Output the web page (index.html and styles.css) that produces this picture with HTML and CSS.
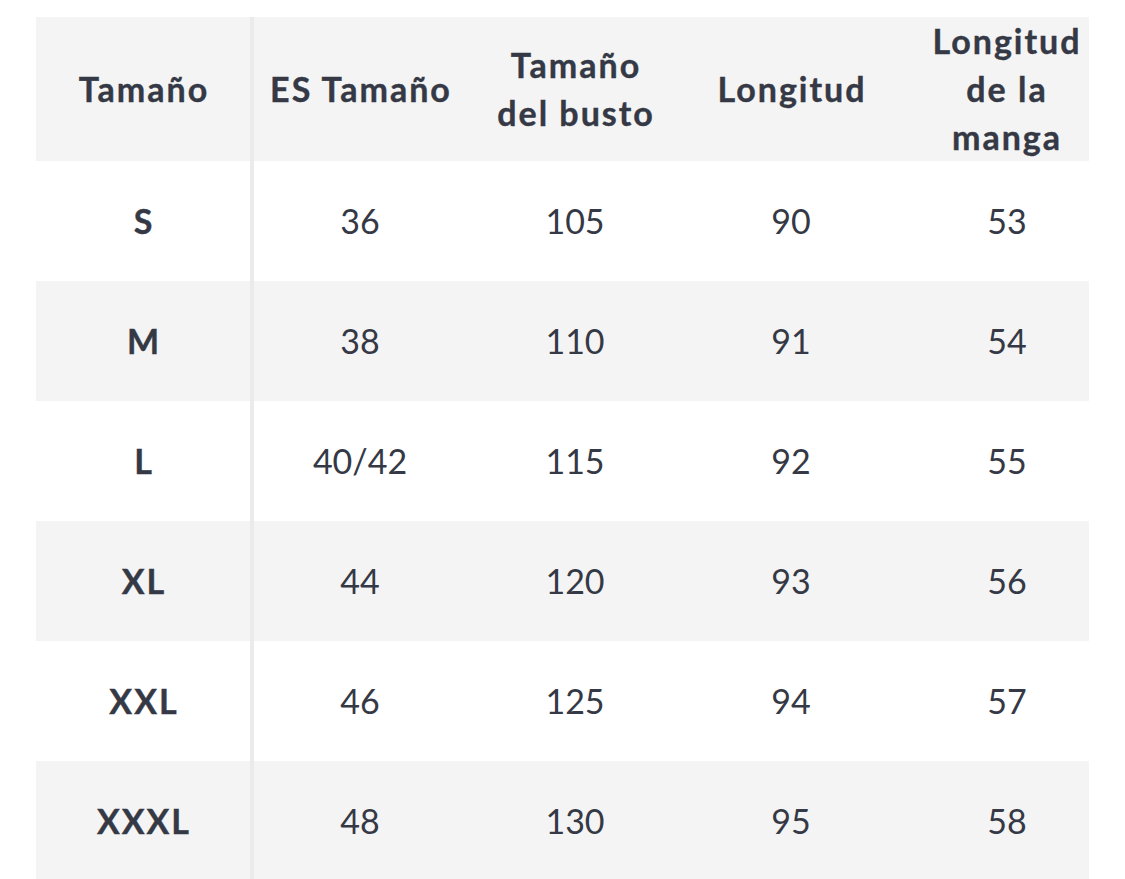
FILE: index.html
```html
<!DOCTYPE html>
<html lang="es">
<head>
<meta charset="utf-8">
<title>Tabla de tallas</title>
<link rel="stylesheet" href="styles.css">
</head>
<body>
<div class="size-table">
  <div class="row head">
    <div class="cell first">Tamaño</div>
    <div class="cell">ES Tamaño</div>
    <div class="cell">Tamaño<br>del busto</div>
    <div class="cell">Longitud</div>
    <div class="cell last">Longitud<br>de la<br>manga</div>
  </div>
  <div class="row">
    <div class="cell first">S</div><div class="cell">36</div><div class="cell">105</div><div class="cell">90</div><div class="cell last">53</div>
  </div>
  <div class="row alt">
    <div class="cell first">M</div><div class="cell">38</div><div class="cell">110</div><div class="cell">91</div><div class="cell last">54</div>
  </div>
  <div class="row">
    <div class="cell first">L</div><div class="cell">40/42</div><div class="cell">115</div><div class="cell">92</div><div class="cell last">55</div>
  </div>
  <div class="row alt">
    <div class="cell first">XL</div><div class="cell">44</div><div class="cell">120</div><div class="cell">93</div><div class="cell last">56</div>
  </div>
  <div class="row">
    <div class="cell first">XXL</div><div class="cell">46</div><div class="cell">125</div><div class="cell">94</div><div class="cell last">57</div>
  </div>
  <div class="row alt">
    <div class="cell first">XXXL</div><div class="cell">48</div><div class="cell">130</div><div class="cell">95</div><div class="cell last">58</div>
  </div>
</div>
</body>
</html>
```
FILE: styles.css
```css
html, body {
  margin: 0;
  padding: 0;
  background: #ffffff;
  overflow: hidden;
}
body {
  font-family: "Lato", "Noto Sans", sans-serif;
  color: #353945;
}
.size-table {
  margin: 17px 0 0 36px;
  width: 1053px;
}
.row {
  display: grid;
  grid-template-columns: 218px 212px 218px 214px 191px;
  height: 120px;
  background: #ffffff;
}
.row.alt, .row.head {
  background: #f4f4f4;
}
.row.head {
  height: 144px;
}
.cell {
  box-sizing: border-box;
  display: flex;
  align-items: center;
  justify-content: center;
  text-align: center;
  font-size: 34px;
  line-height: 48px;
  font-weight: 400;
}
.row.head .cell,
.cell.first {
  font-weight: 700;
  letter-spacing: 2px;
  padding-left: 2px;
  -webkit-text-stroke: 0.4px currentColor;
}
.cell.first {
  border-right: 4px solid #ebebeb;
}
.cell.last,
.row.head .cell.last {
  padding-left: 27px;
}
```
